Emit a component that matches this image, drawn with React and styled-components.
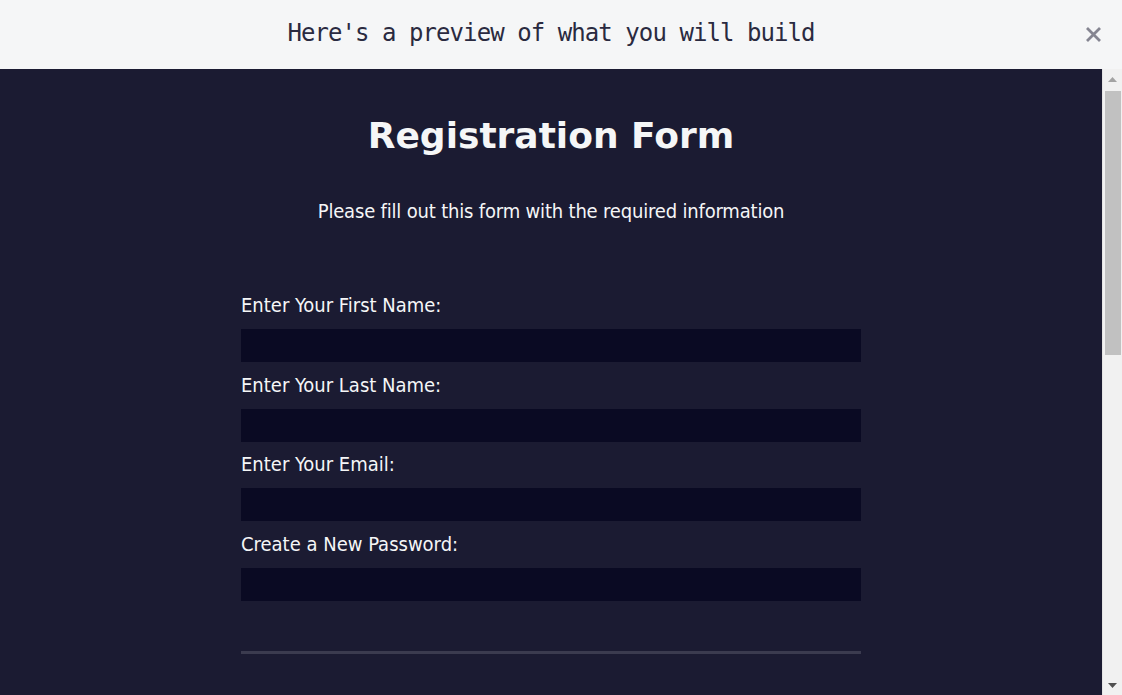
import React from "react";
import styled, { createGlobalStyle } from "styled-components";

const Global = createGlobalStyle`
  html, body { margin: 0; padding: 0; height: 100%; overflow: hidden; }
  body { background: #1b1b32; }
  #root { height: 100%; }
`;

const Page = styled.div`
  display: flex;
  flex-direction: column;
  width: 1122px;
  height: 695px;
`;

const TopBar = styled.header`
  position: relative;
  flex: 0 0 69px;
  box-sizing: border-box;
  display: flex;
  align-items: center;
  justify-content: center;
  background: #f5f6f7;
  padding: 0 20px 4px 0;
`;

const Preview = styled.h2`
  margin: 0;
  font-family: "DejaVu Sans Mono", monospace;
  font-weight: 400;
  font-size: 24px;
  letter-spacing: -0.93px;
  color: #2a2a40;
`;

const Close = styled.button`
  position: absolute;
  right: 18px;
  top: 23px;
  width: 22px;
  height: 22px;
  padding: 0;
  border: none;
  background: transparent;
  display: flex;
  align-items: center;
  justify-content: center;
`;

const Frame = styled.div`
  flex: 1;
  display: flex;
  min-height: 0;
`;

const Content = styled.main`
  flex: 1;
  background: #1b1b32;
  color: #f5f6f7;
  font-family: Tahoma, "DejaVu Sans Condensed", "DejaVu Sans", sans-serif;
  display: flex;
  flex-direction: column;
  align-items: center;
  padding-top: 45px;
  overflow: hidden;
`;

const Title = styled.h1`
  margin: 0;
  font-family: "DejaVu Sans", sans-serif;
  font-size: 36px;
  line-height: 44px;
  font-weight: 700;
  text-align: center;
`;

const Subtitle = styled.p`
  margin: 41px 0 0;
  font-size: 20px;
  line-height: 24px;
  letter-spacing: -0.18px;
  text-align: center;
`;

const Form = styled.form`
  width: 620px;
  margin-top: 70px;
`;

const Fieldset = styled.fieldset`
  border: none;
  margin: 0;
  padding: 0 0 50px;
  border-bottom: 3px solid #3b3b4f;
  display: flex;
  flex-direction: column;
  gap: 10.67px;
`;

const Field = styled.label`
  display: flex;
  flex-direction: column;
  gap: 12px;
  font-size: 20px;
  line-height: 24px;
`;

const Input = styled.input`
  box-sizing: border-box;
  width: 100%;
  height: 33px;
  margin: 0;
  background: #0a0a23;
  border: 1px solid #0a0a23;
  color: #fff;
  font-size: 16px;
`;

const Scrollbar = styled.div`
  flex: 0 0 20px;
  background: #f1f1f1;
  border-left: 1px solid #e4e4e4;
  box-sizing: border-box;
  display: flex;
  flex-direction: column;
  align-items: center;
`;

const Arrow = styled.div`
  flex: 0 0 20px;
  display: flex;
  align-items: center;
  justify-content: center;
`;

const Track = styled.div`
  flex: 1;
  width: 100%;
  display: flex;
  justify-content: center;
`;

const Thumb = styled.div`
  width: 16px;
  height: 264px;
  margin-top: 2px;
  background: #c1c1c1;
`;

const fields = [
  "Enter Your First Name:",
  "Enter Your Last Name:",
  "Enter Your Email:",
  "Create a New Password:",
];

export default function App() {
  return (
    <Page>
      <Global />
      <TopBar>
        <Preview>Here's a preview of what you will build</Preview>
        <Close aria-label="close">
          <svg width="17" height="17" viewBox="0 0 17 17">
            <path d="M2 2L15 15M15 2L2 15" stroke="#858591" strokeWidth="2.8" strokeLinecap="butt" />
          </svg>
        </Close>
      </TopBar>
      <Frame>
        <Content>
          <Title>Registration Form</Title>
          <Subtitle>Please fill out this form with the required information</Subtitle>
          <Form>
            <Fieldset>
              {fields.map((f) => (
                <Field key={f}>
                  {f}
                  <Input />
                </Field>
              ))}
            </Fieldset>
          </Form>
        </Content>
        <Scrollbar>
          <Arrow>
            <svg width="9" height="5" viewBox="0 0 9 5"><path d="M4.5 0L9 5H0z" fill="#a3a3a3" /></svg>
          </Arrow>
          <Track>
            <Thumb />
          </Track>
          <Arrow>
            <svg width="9" height="5" viewBox="0 0 9 5"><path d="M0 0H9L4.5 5z" fill="#505050" /></svg>
          </Arrow>
        </Scrollbar>
      </Frame>
    </Page>
  );
}
